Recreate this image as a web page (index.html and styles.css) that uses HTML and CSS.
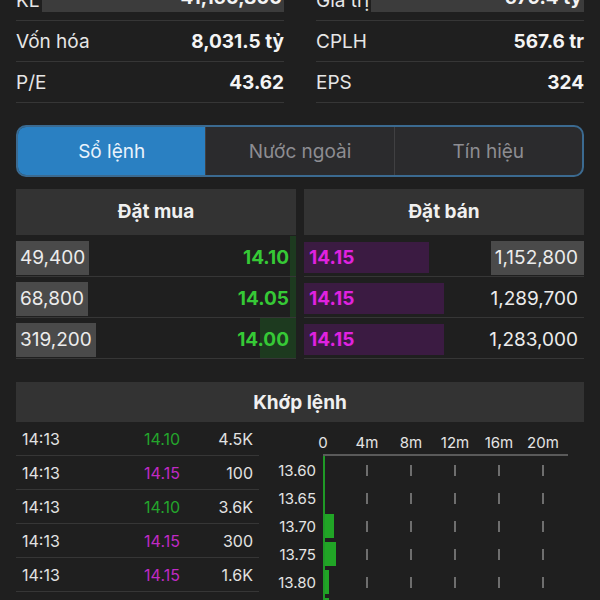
FILE: index.html
```html
<!DOCTYPE html>
<html lang="vi">
<head>
    <meta charset="UTF-8">
    <meta name="viewport" content="width=device-width, initial-scale=1.0">
    <title>Sổ lệnh</title>
    <link rel="stylesheet" href="styles.css">
</head>
<body>
    <div id="stats">
        <div class="stat-col">
            <div class="stat-row"><span class="stat-label">KL</span><span class="stat-value flash">41,160,800</span></div>
            <div class="stat-row"><span class="stat-label">Vốn hóa</span><span class="stat-value">8,031.5 tỷ</span></div>
            <div class="stat-row"><span class="stat-label">P/E</span><span class="stat-value">43.62</span></div>
        </div>
        <div class="stat-col">
            <div class="stat-row"><span class="stat-label">Giá trị</span><span class="stat-value flash">579.4 tỷ</span></div>
            <div class="stat-row"><span class="stat-label">CPLH</span><span class="stat-value">567.6 tr</span></div>
            <div class="stat-row"><span class="stat-label">EPS</span><span class="stat-value">324</span></div>
        </div>
    </div>

    <div id="tabs">
        <div class="tab active">Sổ lệnh</div>
        <div class="tab">Nước ngoài</div>
        <div class="tab">Tín hiệu</div>
    </div>

    <div id="book">
        <div class="book-side">
            <div class="box-title">Đặt mua</div>
            <div class="book-row buy">
                <span class="depth" style="width: 6px"></span>
                <span class="qty boxed">49,400</span><span class="price">14.10</span>
            </div>
            <div class="book-row buy">
                <span class="depth" style="width: 6px"></span>
                <span class="qty boxed">68,800</span><span class="price">14.05</span>
            </div>
            <div class="book-row buy">
                <span class="depth" style="width: 36px"></span>
                <span class="qty boxed">319,200</span><span class="price">14.00</span>
            </div>
        </div>
        <div class="book-side">
            <div class="box-title">Đặt bán</div>
            <div class="book-row sell">
                <span class="depth" style="width: 125px"></span>
                <span class="price">14.15</span><span class="qty boxed">1,152,800</span>
            </div>
            <div class="book-row sell">
                <span class="depth" style="width: 140px"></span>
                <span class="price">14.15</span><span class="qty">1,289,700</span>
            </div>
            <div class="book-row sell">
                <span class="depth" style="width: 140px"></span>
                <span class="price">14.15</span><span class="qty">1,283,000</span>
            </div>
        </div>
    </div>

    <div id="matched">
        <div class="box-title">Khớp lệnh</div>
        <div class="matched-body">
            <div class="trades">
                <div class="trade"><span>14:13</span><span class="up">14.10</span><span class="vol">4.5K</span></div>
                <div class="trade"><span>14:13</span><span class="down">14.15</span><span class="vol">100</span></div>
                <div class="trade"><span>14:13</span><span class="up">14.10</span><span class="vol">3.6K</span></div>
                <div class="trade"><span>14:13</span><span class="down">14.15</span><span class="vol">300</span></div>
                <div class="trade"><span>14:13</span><span class="down">14.15</span><span class="vol">1.6K</span></div>
                <div class="trade"><span>14:13</span><span class="up">14.10</span><span class="vol">2.0K</span></div>
            </div>
            <div class="chart">
                <div class="chart-axis">
                    <span>0</span><span>4m</span><span>8m</span><span>12m</span><span>16m</span><span>20m</span>
                </div>
                <div class="chart-line"></div>
                <div class="chart-row"><span class="chart-label">13.60</span><div class="plot"></div></div>
                <div class="chart-row"><span class="chart-label">13.65</span><div class="plot"></div></div>
                <div class="chart-row"><span class="chart-label">13.70</span><div class="plot"><div class="bar" style="width: 9px"></div></div></div>
                <div class="chart-row"><span class="chart-label">13.75</span><div class="plot"><div class="bar" style="width: 11px"></div></div></div>
                <div class="chart-row"><span class="chart-label">13.80</span><div class="plot"><div class="bar" style="width: 4px"></div></div></div>
                <div class="chart-row"><span class="chart-label">13.85</span><div class="plot"><div class="bar" style="width: 4px"></div></div></div>
            </div>
        </div>
    </div>
</body>
</html>
```

FILE: styles.css
```css
html, body {
    height: 100%;
    overflow: hidden;
}
body {
    margin: 0;
    padding: 0 16px;
    background: #1f1f1f;
    color: #ececec;
    font-family: 'Inter', 'Roboto', sans-serif;
}

/* thong tin co phieu */
#stats {
    display: grid;
    grid-template-columns: 1fr 1fr;
    column-gap: 32px;
    margin-top: -20px;
}
.stat-row {
    display: flex;
    align-items: center;
    height: 40px;
    border-bottom: 1px solid #363636;
    font-size: 19px;
}
.stat-label { color: #e6e6e6; }
.stat-value { flex: 1; text-align: right; font-weight: 700; color: #f4f4f4; }
.stat-value.flash {
    margin-left: 2px;
    background: #3c3c3c;
    padding-right: 2px;
    line-height: 28px;
    align-self: flex-start;
    margin-top: 4px;
}

/* tabs */
#tabs {
    display: flex;
    margin-top: 22px;
    height: 48px;
    border: 2px solid #3b6a90;
    border-radius: 10px;
    overflow: hidden;
    background: #2b2b2d;
}
.tab {
    flex: 1;
    display: flex;
    align-items: center;
    justify-content: center;
    font-size: 19px;
    color: #8d8d92;
    border-left: 1px solid #404042;
}
.tab:first-child { border-left: none; }
.tab.active { background: #2a80c2; color: #e9f3fc; }

/* so lenh */
.box-title {
    height: 46px;
    line-height: 46px;
    text-align: center;
    background: #333333;
    font-size: 19px;
    font-weight: 700;
    color: #f0f0f0;
}
#book {
    display: grid;
    grid-template-columns: 1fr 1fr;
    column-gap: 8px;
    margin-top: 12px;
}
.book-side .box-title { margin-bottom: 1px; }
.book-row {
    position: relative;
    display: flex;
    align-items: center;
    justify-content: space-between;
    height: 37px;
    padding-top: 3px;
    border-bottom: 1px solid #363636;
    font-size: 19px;
}
.book-row span { position: relative; }
.book-row .depth {
    position: absolute;
    top: 6px;
    bottom: 3px;
}
.buy .depth { right: 0; background: #1d3a1f; top: 0; bottom: 0; }
.sell .depth { left: 0; background: #3b1b42; }
.qty { color: #ececec; line-height: 34px; padding: 0 4px; }
.qty.boxed { background: #4a4a4a; }
.sell .qty { padding-right: 6px; }
.price { font-weight: 700; }
.buy .price { color: #36c936; padding-right: 7px; }
.sell .price { color: #e022e0; padding-left: 5px; }

/* khop lenh */
#matched { margin-top: 23px; }
#matched .box-title { height: 40px; line-height: 42px; }
.matched-body {
    display: grid;
    grid-template-columns: 243px 1fr;
    column-gap: 11px;
}
.trade {
    display: grid;
    grid-template-columns: 90px 100px 1fr;
    align-items: center;
    height: 33px;
    border-bottom: 1px solid #363636;
    font-size: 16px;
    color: #e2e2e2;
    padding: 0 6px;
}
.trade .up { color: #24a52c; text-align: center; }
.trade .down { color: #c02ac4; text-align: center; }
.trade .vol { text-align: right; }

.chart { font-size: 15px; color: #e4e4e4; }
.chart-axis {
    display: flex;
    margin-left: 31px;
    height: 32px;
    padding-top: 12px;
    box-sizing: border-box;
    line-height: 18px;
}
.chart-axis span { width: 44px; text-align: center; }
.chart-line {
    margin-left: 53px;
    width: 245px;
    height: 2px;
    background: #5a5a5a;
}
.chart-row {
    display: flex;
    align-items: center;
    height: 28px;
}
.chart-label { width: 46px; text-align: right; margin-right: 7px; }
.plot {
    width: 243px;
    height: 28px;
    border-left: 2px solid #1f9a26;
    background-image: repeating-linear-gradient(to right, transparent 0 41px, #6e6e6e 41px 43px, transparent 43px 44px);
    background-size: 100% 11px;
    background-position: 0 center;
    background-repeat: no-repeat;
    display: flex;
    align-items: center;
}
.bar { height: 24px; background: #21a526; }
```
